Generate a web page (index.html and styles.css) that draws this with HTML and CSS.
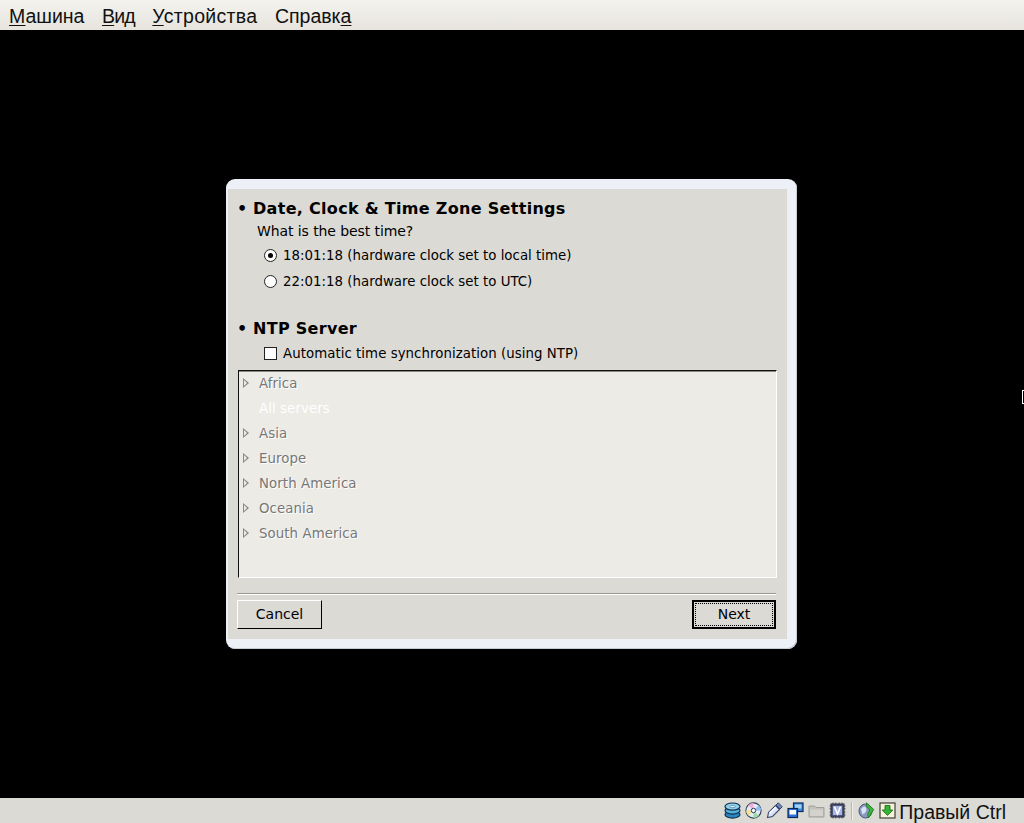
FILE: index.html
```html
<!DOCTYPE html>
<html lang="ru">
<head>
  <meta charset="UTF-8" />
  <title>VirtualBox</title>
  <link rel="stylesheet" href="styles.css">
</head>
<body>
  <!-- Menu bar -->
  <nav class="menubar">
    <a><u>М</u>ашина</a>
    <a class="narrow"><u>В</u>ид</a>
    <a class="wide"><u>У</u>стройства</a>
    <a>Справк<u>а</u></a>
  </nav>

  <!-- Guest screen -->
  <main class="screen">
    <span class="text-cursor"></span>
    <div class="dialog">
      <div class="dialog-inner">
        <h2 class="heading"><span class="bullet">•</span>Date, Clock &amp; Time Zone Settings</h2>
        <p class="question">What is the best time?</p>
        <div class="option"><span class="radio checked"></span>18:01:18 (hardware clock set to local time)</div>
        <div class="option"><span class="radio"></span>22:01:18 (hardware clock set to UTC)</div>

        <h2 class="heading ntp"><span class="bullet">•</span>NTP Server</h2>
        <div class="option check-row"><span class="checkbox"></span>Automatic time synchronization (using NTP)</div>

        <ul class="server-list">
          <li><span class="arrow"></span>Africa</li>
          <li class="selected"><span class="arrow none"></span>All servers</li>
          <li><span class="arrow"></span>Asia</li>
          <li><span class="arrow"></span>Europe</li>
          <li><span class="arrow"></span>North America</li>
          <li><span class="arrow"></span>Oceania</li>
          <li><span class="arrow"></span>South America</li>
        </ul>

        <div class="separator"></div>
        <div class="buttons">
          <button class="btn">Cancel</button>
          <button class="btn default"><span class="focus">Next</span></button>
        </div>
      </div>
    </div>
  </main>

  <!-- Status bar -->
  <footer class="statusbar">
    <svg class="icon" viewBox="0 0 17 17"><ellipse cx="8.5" cy="12.5" rx="7.5" ry="3.6" fill="#2b86c0" stroke="#0f2f4c" stroke-width="1.2"/><ellipse cx="8.5" cy="8.5" rx="7.5" ry="3.6" fill="#55aedb" stroke="#0f2f4c" stroke-width="1.2"/><ellipse cx="8.5" cy="4.6" rx="7.5" ry="3.6" fill="#8fd0ee" stroke="#0f2f4c" stroke-width="1.2"/><ellipse cx="8.5" cy="4.6" rx="2.8" ry="1.1" fill="#eaf6fc" stroke="#2b6a94" stroke-width=".6"/></svg>
    <svg class="icon" viewBox="0 0 17 17"><circle cx="8.5" cy="8.5" r="7.6" fill="#e4eaf6" stroke="#2c3c52" stroke-width="1.1"/><path d="M8.5 8.5 L3.2 3.2 A7.5 7.5 0 0 1 8.5 1Z" fill="#f2aed6"/><path d="M8.5 8.5 L13.8 13.8 A7.5 7.5 0 0 1 8.5 16Z" fill="#98dca8"/><path d="M8.5 8.5 L16 8.5 A7.5 7.5 0 0 0 13.8 3.2Z" fill="#8fbcf2"/><path d="M8.5 8.5 L1 8.5 A7.5 7.5 0 0 0 3.2 13.8Z" fill="#f4e08c"/><circle cx="8.5" cy="8.5" r="2.2" fill="#fff" stroke="#2c3c52"/></svg>
    <svg class="icon" viewBox="0 0 17 17"><path d="M1.5 15.5 L2.5 10.5 L9.5 3.5 L13.5 7.5 L6.5 14.5Z" fill="#dbe4f6" stroke="#36466e" stroke-width="1.1"/><path d="M3.5 11 L10 5" stroke="#fff" stroke-width="1.4"/><path d="M10 3 L12.3 .8 L16.2 4.7 L14 7Z" fill="#6f86ba" stroke="#36466e"/></svg>
    <svg class="icon" viewBox="0 0 17 17"><rect x="6.5" y="1" width="9.5" height="8.5" fill="#3a8ce6" stroke="#0a2858" stroke-width="1.2"/><rect x="8" y="2.5" width="6.5" height="4" fill="#a4d0f6"/><rect x="1" y="6.5" width="9.5" height="9" fill="#2a74d4" stroke="#0a2858" stroke-width="1.2"/><rect x="2.5" y="8" width="6.5" height="4.5" fill="#fff"/></svg>
    <svg class="icon" viewBox="0 0 17 17"><path d="M1 4 H6.5 L8 5.5 H16 V15 H1Z" fill="#c4c2bc" stroke="#a09f99"/><rect x="2" y="7.5" width="13" height="6.5" fill="#d4d2cc"/></svg>
    <svg class="icon" viewBox="0 0 17 17"><path d="M4 .5V16.5M6.8 .5V16.5M10.2 .5V16.5M13 .5V16.5M.5 4H16.5M.5 6.8H16.5M.5 10.2H16.5M.5 13H16.5" stroke="#30364a" stroke-width=".8"/><rect x="2" y="2" width="13" height="13" fill="#4c5470" stroke="#262a3e"/><rect x="4" y="4" width="9" height="9" fill="#a8b4e6"/><path d="M5.5 4.8 L8.5 12 L11.5 4.8" fill="none" stroke="#fff" stroke-width="1.6"/></svg>
    <span class="divider"></span>
    <svg class="icon" viewBox="0 0 17 17"><ellipse cx="7.5" cy="9" rx="6.5" ry="7" fill="#8a9ac2" stroke="#46547a"/><path d="M3 7 Q6.5 2.5 8 6 T4.5 12.5Z" fill="#dce4f4"/><path d="M8.5 .8 L15.8 7.5 L10.5 16 L9.5 12.5 L11.8 8 L8.5 4.5Z" fill="#39b539" stroke="#1a6a1a" stroke-width=".7"/></svg>
    <svg class="icon" viewBox="0 0 17 17"><rect x="1" y="1" width="15" height="15" fill="#f4f2d8" stroke="#40403a" stroke-width="1.2"/><path d="M6 3.5 H11 V8 H13.8 L8.5 13.5 L3.2 8 H6Z" fill="#34b434" stroke="#14641a" stroke-width=".8"/></svg>
    <span class="host-key">Правый Ctrl</span>
  </footer>
</body>
</html>
```

FILE: styles.css
```css
body {
  margin: 0;
  height: 823px;
  display: flex;
  flex-direction: column;
  overflow: hidden;
  background: #000;
}

/* Menu bar */
.menubar {
  height: 30px;
  box-sizing: border-box;
  padding: 2px 0 0 9px;
  display: flex;
  align-items: center;
  gap: 17.5px;
  background: linear-gradient(#f4f3ef, #e6e4dc);
  font-family: "Liberation Sans", Arial, sans-serif;
  font-size: 19.5px;
  color: #111;
}
.menubar u {
  text-underline-offset: 2px;
}
.menubar .narrow {
  letter-spacing: -0.8px;
}
.menubar .wide {
  letter-spacing: 0.3px;
}

/* Screen */
.screen {
  flex: 1;
  position: relative;
  display: flex;
  align-items: center;
  justify-content: center;
  padding-right: 1px;
  background: #000;
}
.text-cursor {
  position: absolute;
  right: 0;
  top: 360px;
  width: 1px;
  height: 12px;
  border: 1px solid #fff;
  border-right: none;
}
.dialog {
  width: 571px;
  height: 470px;
  box-sizing: border-box;
  padding: 10px 10px 10px 2px;
  border-radius: 9px;
  background: #edf1f7;
  box-shadow: inset -1px -1px 0 #c6ccd6;
}
.dialog-inner {
  height: 100%;
  box-sizing: border-box;
  padding: 9px 10px 0 9px;
  background: #dcdad5;
  font-family: "DejaVu Sans", sans-serif;
  font-size: 13.33px;
  color: #000;
}

.heading {
  margin: 0;
  padding-top: 1px;
  height: 19px;
  line-height: 20px;
  font-size: 16px;
  font-weight: bold;
  letter-spacing: 0.3px;
  display: flex;
}
.heading.ntp {
  margin-top: 24px;
}
.bullet {
  width: 16px;
  flex: none;
  letter-spacing: 0;
}
.question {
  margin: 3px 0 1px 20px;
  height: 20px;
  line-height: 20px;
  font-size: 14px;
  letter-spacing: -0.09px;
}

.option {
  height: 26px;
  display: flex;
  align-items: center;
  margin-left: 27px;
  gap: 6px;
  letter-spacing: 0.02px;
}
.check-row {
  margin-top: 2px;
  letter-spacing: 0.05px;
}
.radio {
  width: 11px;
  height: 11px;
  border: 1px solid #222;
  border-radius: 50%;
  background: #fff;
  display: flex;
  align-items: center;
  justify-content: center;
}
.radio.checked::after {
  content: "";
  width: 5px;
  height: 5px;
  border-radius: 50%;
  background: #000;
}
.checkbox {
  width: 11px;
  height: 11px;
  border: 1px solid #222;
  background: #fff;
}

/* Server list */
.server-list {
  list-style: none;
  margin: 4px 0 0 1px;
  padding: 0;
  width: 539px;
  height: 208px;
  box-sizing: border-box;
  background: #edebe6;
  border: 1px solid #fff;
  border-top: 1px solid #111;
  border-left: 1px solid #111;
  box-shadow: inset 0 1px 0 #8a8883;
  color: #777;
  letter-spacing: 0.08px;
}
.server-list li {
  height: 25px;
  display: flex;
  align-items: center;
  text-shadow: 1px 1px 0 #fff;
}
.server-list li.selected {
  color: #fff;
  text-shadow: none;
}
.arrow {
  position: relative;
  width: 0;
  height: 0;
  margin: -2px 10px 0 4px;
  flex: none;
  border-left: 6px solid #888;
  border-top: 5px solid transparent;
  border-bottom: 5px solid transparent;
}
.arrow::after {
  content: "";
  position: absolute;
  left: -5px;
  top: -3px;
  border-left: 3px solid #edebe6;
  border-top: 3px solid transparent;
  border-bottom: 3px solid transparent;
}
.arrow.none,
.arrow.none::after {
  border-left-color: transparent;
}

.separator {
  margin: 15px 0 0;
  width: 539px;
  border-top: 1px solid #9a9893;
  border-bottom: 1px solid #fff;
}
.buttons {
  margin-top: 5px;
  width: 539px;
  display: flex;
  justify-content: space-between;
}
.btn {
  width: 85px;
  height: 29px;
  padding: 0 0 1px;
  background: #dcdad5;
  border: 1px solid #000;
  border-top-color: #fff;
  border-left-color: #fff;
  font-family: "DejaVu Sans", sans-serif;
  font-size: 14px;
  color: #000;
  display: flex;
  align-items: center;
  justify-content: center;
}
.btn.default {
  width: 84px;
  border: 2px solid #000;
  padding: 1px;
}
.focus {
  flex: 1;
  align-self: stretch;
  display: flex;
  align-items: center;
  justify-content: center;
  border: 1px dotted #000;
  padding-bottom: 1px;
}

/* Status bar */
.statusbar {
  height: 25px;
  box-sizing: border-box;
  padding: 3px 18px 0 0;
  display: flex;
  align-items: center;
  justify-content: flex-end;
  gap: 4px;
  background: #dcdad5;
  font-family: "Liberation Sans", Arial, sans-serif;
  font-size: 19.5px;
  color: #111;
}
.icon {
  width: 17px;
  height: 17px;
  flex: none;
  margin-top: -3px;
}
.divider {
  width: 0;
  height: 18px;
  margin: -3px 1px 0;
  border-left: 1px solid #b8b6b0;
  border-right: 1px solid #f0efeb;
}
.host-key {
  margin-left: -1px;
}
```
